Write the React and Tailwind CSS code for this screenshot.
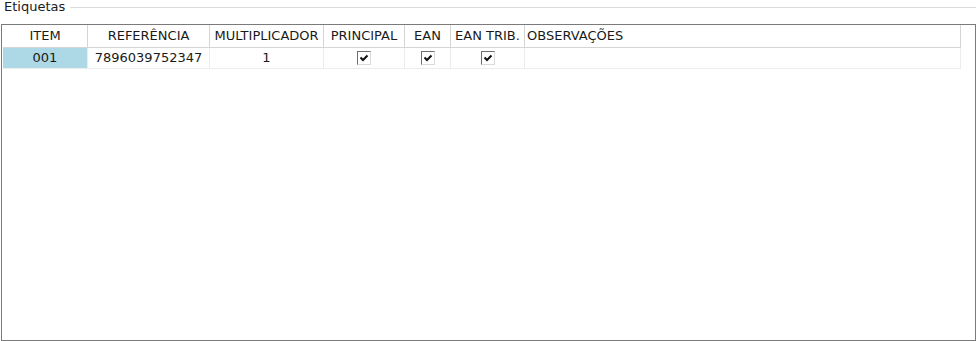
import React from 'react';

const columns = [
  { label: 'ITEM', width: 'w-[85px]' },
  { label: 'REFERÊNCIA', width: 'w-[122px]' },
  { label: 'MULTIPLICADOR', width: 'w-[114px]' },
  { label: 'PRINCIPAL', width: 'w-[81px]' },
  { label: 'EAN', width: 'w-[46px]' },
  { label: 'EAN TRIB.', width: 'w-[74px]' },
  { label: 'OBSERVAÇÕES', width: 'w-[436px]', left: true },
];

function Check() {
  return (
    <span className="inline-flex items-center justify-center w-[14px] h-[14px] bg-white border-t border-l border-t-[#6e6e6e] border-l-[#6e6e6e] border-b border-r border-b-[#dadada] border-r-[#dadada]">
      <svg width="12" height="12" viewBox="0 0 12 12">
        <path d="M2.5 5.5 L5 8 L9.5 3.5" fill="none" stroke="#111" strokeWidth="2" />
      </svg>
    </span>
  );
}

export default function App() {
  const row = ['001', '7896039752347', '1', 'check', 'check', 'check', ''];

  return (
    <div className="w-[976px] h-[341px] bg-white text-[13px] text-[#1a1a1a] font-['DejaVu_Sans',Verdana,sans-serif] overflow-hidden">
      {/* legend */}
      <div className="flex items-center h-[14px]">
        <span className="pl-[4px] pr-[5px] leading-[14px]">Etiquetas</span>
        <div className="flex-1 h-px bg-[#dcdcdc] mt-[1px]" />
      </div>

      {/* grid box */}
      <div className="mt-[10px] ml-[1px] w-[975px] h-[317px] border border-[#7a7a7a] pl-px">
        <div className="flex w-[958px] h-[23px] border-b border-[#d4d4d4]">
          {columns.map((c, i) => (
            <div
              key={i}
              className={`${c.width} shrink-0 flex items-center border-r border-[#d4d4d4] ${c.left ? 'justify-start pl-[2px]' : 'justify-center'} whitespace-nowrap`}
            >
              {c.label}
            </div>
          ))}
        </div>
        <div className="flex w-[958px] h-[21px] border-b border-[#ececec]">
          {columns.map((c, i) => (
            <div
              key={i}
              className={`${c.width} shrink-0 flex items-center justify-center border-r border-[#ececec] ${i === 0 ? 'bg-[#add8e6]' : ''}`}
            >
              {row[i] === 'check' ? <Check /> : row[i]}
            </div>
          ))}
        </div>
      </div>
    </div>
  );
}
